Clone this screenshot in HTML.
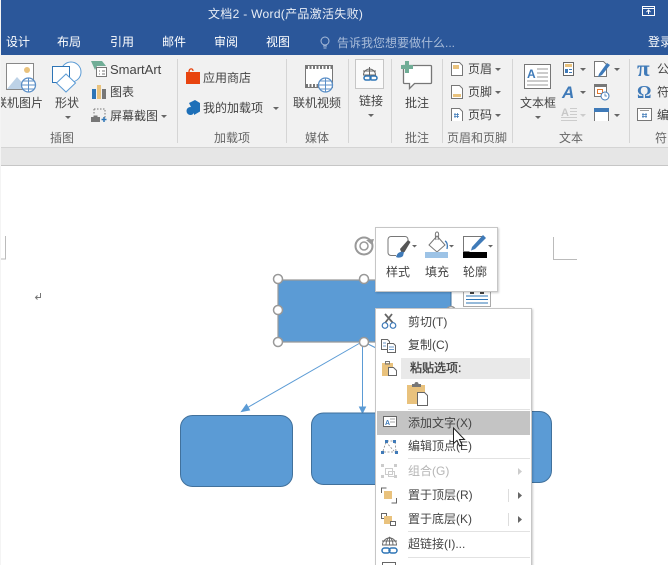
<!DOCTYPE html>
<html><head><meta charset="utf-8">
<style>
html,body{margin:0;padding:0;width:668px;height:565px;overflow:hidden}
body{font-family:"Liberation Sans","Noto Sans CJK SC",sans-serif;background:#fff}
#r{position:absolute;left:0;top:0;width:668px;height:565px;overflow:hidden;background:#fff}
.t{position:absolute;white-space:nowrap;font-size:12px;line-height:16px;color:#444}
.w{color:#fff}
.c{transform:translateX(-50%)}
.g{color:#666}
.m{color:#444;font-size:12px}
svg{position:absolute;left:0;top:0}
.a{position:absolute;width:0;height:0;border-left:3px solid transparent;border-right:3px solid transparent;border-top:3px solid #666}
.s{position:absolute;width:1px;top:59px;height:84px;background:#d5d5d5}
</style></head><body><div id="r">
<div style="position:absolute;left:0;top:0;width:668px;height:55px;background:#2b579a"></div>
<div style="position:absolute;left:0;top:55px;width:668px;height:92px;background:#f1f1f1"></div>
<div style="position:absolute;left:0;top:147px;width:668px;height:19px;background:#e6e6e6;border-top:1px solid #d4d4d4;border-bottom:1px solid #c6c6c6;box-sizing:border-box"></div>

<div class="t w" style="left:208px;top:6px;letter-spacing:.3px;color:#e8edf5">文档2 - Word(产品激活失败)</div>
<div class="t w" style="left:6px;top:34px">设计</div>
<div class="t w" style="left:57px;top:34px">布局</div>
<div class="t w" style="left:110px;top:34px">引用</div>
<div class="t w" style="left:162px;top:34px">邮件</div>
<div class="t w" style="left:214px;top:34px">审阅</div>
<div class="t w" style="left:266px;top:34px">视图</div>
<div class="t" style="left:337px;top:35px;color:#a9bcd9">告诉我您想要做什么...</div>
<div class="t w" style="left:648px;top:34px">登录</div>

<div class="s" style="left:177px"></div><div class="s" style="left:286px"></div><div class="s" style="left:348px"></div><div class="s" style="left:391px"></div><div class="s" style="left:442px"></div><div class="s" style="left:512px"></div><div class="s" style="left:629px"></div>

<div class="t c" style="left:19px;top:95px">联机图片</div>
<div class="t c" style="left:67px;top:95px">形状</div>
<div class="t" style="left:110px;top:62px;font-size:13px">SmartArt</div>
<div class="t" style="left:110px;top:84px">图表</div>
<div class="t" style="left:110px;top:108px">屏幕截图</div>
<div class="t g c" style="left:62px;top:130px">插图</div>
<div class="t" style="left:203px;top:70px">应用商店</div>
<div class="t" style="left:203px;top:100px">我的加载项</div>
<div class="t g c" style="left:232px;top:130px">加载项</div>
<div class="t c" style="left:317px;top:95px">联机视频</div>
<div class="t g c" style="left:317px;top:130px">媒体</div>
<div class="t c" style="left:371px;top:93px">链接</div>
<div class="t c" style="left:417px;top:95px">批注</div>
<div class="t g c" style="left:417px;top:130px">批注</div>
<div class="t" style="left:468px;top:61px">页眉</div>
<div class="t" style="left:468px;top:84px">页脚</div>
<div class="t" style="left:468px;top:107px">页码</div>
<div class="t g c" style="left:477px;top:130px">页眉和页脚</div>
<div class="t c" style="left:538px;top:95px">文本框</div>
<div class="t g c" style="left:571px;top:130px">文本</div>
<div class="t" style="left:657px;top:61px">公</div>
<div class="t" style="left:657px;top:84px">符</div>
<div class="t" style="left:657px;top:107px">编</div>
<div class="t g" style="left:655px;top:130px">符</div>

<div class="a" style="left:65px;top:116px"></div><div class="a" style="left:161px;top:115px"></div><div class="a" style="left:273px;top:107px"></div><div class="a" style="left:368px;top:114px"></div><div class="a" style="left:495px;top:68px"></div><div class="a" style="left:495px;top:91px"></div><div class="a" style="left:495px;top:114px"></div><div class="a" style="left:535px;top:116px"></div><div class="a" style="left:580px;top:68px"></div><div class="a" style="left:580px;top:91px"></div><div class="a" style="left:580px;top:114px;border-top-color:#ccc"></div><div class="a" style="left:614px;top:68px"></div><div class="a" style="left:614px;top:114px"></div>

<svg width="668" height="565" viewBox="0 0 668 565" fill="none">
<!-- restore -->
<path d="M642.500 6.500h12v9h-12z" stroke="#fff"/><path d="M642 8.500h13" stroke="#fff"/><path d="M648.500 14V10M646.500 12l2-2 2 2" stroke="#fff"/>
<!-- bulb -->
<circle cx="325" cy="41" r="4" stroke="#a9bcd9"/><path d="M323 46h4M323.500 48h3" stroke="#a9bcd9"/>
<!-- picture icon -->
<path d="M6.500 63.500h27v26h-27z" fill="#fff" stroke="#888"/><circle cx="27" cy="70" r="3" fill="#e9c27d"/><path d="M7 89l10-12 11 12z" fill="#bdd2e7"/><circle cx="28.500" cy="85" r="7" fill="#fff" stroke="#5b8fc7" stroke-width="1.300"/><path d="M21.500 85h14M28.500 78v14M23 81h11M23 89h11" stroke="#5b8fc7"/>
<!-- shapes -->
<circle cx="71" cy="72" r="10" fill="#fff" stroke="#5b9bd5"/><path d="M52.500 66.500h17v16h-17z" fill="#fff" stroke="#2e75b6"/><path d="M66 74l9.500 9-9.500 9-9.500-9z" fill="#fff" stroke="#5b9bd5"/>
<!-- smartart -->
<path d="M91 61h11l4 5h-9l-2 4z" fill="#70ad96"/><path d="M96.500 67.500h10v9h-10z" fill="#fff" stroke="#777"/><path d="M99 71h1M102 71h3M99 74h1M102 74h3" stroke="#777"/>
<!-- chart -->
<path d="M92 89h4v10h-4z" fill="#2e75b6"/><path d="M97 85h4v14h-4z" fill="#e9c27d"/><path d="M102 89h4v10h-4z" fill="#777"/>
<!-- screenshot -->
<path d="M94 109h11v9" stroke="#777" stroke-dasharray="1.500 1.500"/><path d="M94 109v5" stroke="#777" stroke-dasharray="1.500 1.500"/><path d="M91 117h9v5h-9z" fill="#777"/><path d="M93.500 116.500h4" stroke="#777" stroke-width="2"/><path d="M104 117v5M101.500 119.500h5" stroke="#2e75b6" stroke-width="1.500"/>
<!-- store -->
<path d="M186 72h14v12h-14z" fill="#e8440f"/><path d="M189 72c0-4 4-4 4-1" stroke="#e8440f" stroke-width="1.300"/>
<!-- addins -->
<path d="M194 101l6 3.500v7l-6 3.500v-14z" fill="#1d6fb8"/><path d="M189 103l6-3 5 3v6h-8z" fill="#1d6fb8"/><circle cx="190.500" cy="111" r="4" fill="#1d6fb8"/>
<!-- video -->
<path d="M305.500 65.500h27v22h-27z" fill="#fff" stroke="#777"/><path d="M306 67.500h26M306 85.500h26" stroke="#777" stroke-width="3" stroke-dasharray="2 1.500"/><circle cx="325.500" cy="85" r="7" fill="#fff" stroke="#5b8fc7" stroke-width="1.300"/><path d="M318.500 85h14M325.500 78v14M320 81h11M320 89h11" stroke="#5b8fc7"/>
<!-- link -->
<path d="M355.500 59.500h28v29h-28z" fill="#fafafa" stroke="#c6c6c6"/><path d="M363.500 75a6 6 0 0 1 12 0zM363 71h13M369.500 67v8" stroke="#666"/><rect x="364" y="76" width="7" height="4" rx="2" stroke="#2e75b6" stroke-width="1.500"/><rect x="370" y="76" width="7" height="4" rx="2" stroke="#2e75b6" stroke-width="1.500"/>
<!-- comment -->
<path d="M403.500 65.500h27a1 1 0 0 1 1 1v16a1 1 0 0 1-1 1h-16l-5 5v-5h-5a1 1 0 0 1-1-1v-17z" fill="#fff" stroke="#777" stroke-width="1.300"/><path d="M405 61h4v4h4v4h-4v4h-4v-4h-4v-4h4z" fill="#70ad96"/>
<!-- header footer -->
<path d="M451.500 62.500h8l3 3v10h-11z" fill="#fff" stroke="#777"/><path d="M453 65h6v4h-6z" fill="#e9c27d"/>
<path d="M451.500 85.500h8l3 3v10h-11z" fill="#fff" stroke="#777"/><path d="M453 94h8v3h-8z" fill="#e9c27d"/>
<path d="M451.500 121v-12.500h8l3 3v9.500" fill="#fff" stroke="#777"/><path d="M455 113v5M457.500 113v5M454 114.500h5M454 116.500h5" stroke="#3f7ab8" stroke-width=".8"/>
<!-- textbox -->
<path d="M524.500 64.500h26v24h-26z" fill="#fff" stroke="#777"/><text x="527" y="78" font-family="Liberation Sans" font-size="12" font-weight="bold" fill="#3f7ab8">A</text><path d="M537 69h11M537 73h11M537 77h11M527 81h21M527 85h21" stroke="#999"/>
<path d="M563.500 62.500h10v13h-10z" fill="#fff" stroke="#666"/><path d="M565 64h7v3h-7z" fill="#e9c27d"/><path d="M565 69h3v4h-3z" fill="#3f7ab8"/><path d="M569 69.500h3M569 72.500h3" stroke="#3f7ab8"/>
<text x="562" y="98" font-family="Liberation Sans" font-size="17" font-weight="bold" font-style="italic" fill="#3f7ab8">A</text>
<text x="561" y="116" font-family="Liberation Sans" font-size="11" font-weight="bold" fill="#c8c8c8">A</text><path d="M570 108.500h7M570 111.500h7M570 114.500h7M561 117.500h16M561 120.500h16" stroke="#ccc"/>
<path d="M594.500 61.500h9l3 3v12h-12z" fill="#fff" stroke="#777"/><path d="M599 74l8-11 3 2-8 10-4 2z" fill="#3f7ab8"/>
<path d="M594.500 85.500h12v11h-12z" fill="#fff" stroke="#777"/><path d="M594 84h13v3h-13z" fill="#777"/><path d="M597.500 89.500h5v4h-5z" stroke="#e2772e"/><circle cx="605" cy="96" r="4" fill="#fff" stroke="#3f7ab8"/><path d="M605 93.500V96h2" stroke="#3f7ab8" stroke-width=".8"/>
<path d="M594.500 112h14v9h-14z" fill="#fff"/><path d="M594 108h15v4h-15z" fill="#3f7ab8"/><path d="M594.500 121v-9M608.500 121v-9" stroke="#777"/>
<!-- symbols -->
<text x="637" y="76" font-family="Liberation Serif" font-size="23" font-weight="bold" fill="#3f7ab8">π</text>
<text x="637" y="98" font-family="Liberation Serif" font-size="18" font-weight="bold" fill="#3f7ab8">Ω</text>
<path d="M637.500 108.500h14v12h-14z" fill="#fff" stroke="#777"/><path d="M640 110.500h9" stroke="#999"/><path d="M643 113v5M646 113v5M642 114.500h5M642 116.500h5" stroke="#3f7ab8" stroke-width=".8"/>

<!-- page marks -->
<path d="M5.500 236v23H1" stroke="#bbb"/>
<path d="M553.500 237v22.500H577" stroke="#bbb"/>
<path d="M40.500 293v4.500h-5" stroke="#777"/><path d="M37.500 295.500l-2 2 2 2" stroke="#777"/>

<!-- connectors -->
<path d="M360 343L245 409" stroke="#5b9bd5"/><path d="M241.500 411.500l5-7 3 5.500z" fill="#5b9bd5" stroke="#5b9bd5"/>
<path d="M362.500 343v67" stroke="#5b9bd5"/><path d="M359.500 407h6l-3 6z" fill="#5b9bd5" stroke="#5b9bd5"/>
<path d="M368 344l10 5" stroke="#5b9bd5"/>

<!-- shapes -->
<rect x="180.500" y="415.500" width="112" height="71" rx="12" fill="#5b9bd5" stroke="#41719c"/>
<rect x="311.500" y="413" width="100" height="71.500" rx="12" fill="#5b9bd5" stroke="#41719c"/>
<rect x="480.500" y="411.500" width="71" height="71" rx="12" fill="#5b9bd5" stroke="#41719c"/>
<rect x="278" y="280" width="173" height="62" fill="#5b9bd5" stroke="#41719c"/>
<path d="M278 280h173M278 280v62h173" stroke="#999" stroke-width="1.200"/>
<circle cx="278" cy="279" r="4.500" fill="#fff" stroke="#999" stroke-width="1.500"/>
<circle cx="364" cy="279" r="4.500" fill="#fff" stroke="#999" stroke-width="1.500"/>
<circle cx="278" cy="310" r="4.500" fill="#fff" stroke="#999" stroke-width="1.500"/>
<circle cx="278" cy="342" r="4.500" fill="#fff" stroke="#999" stroke-width="1.500"/>
<circle cx="364" cy="342" r="4.500" fill="#fff" stroke="#999" stroke-width="1.500"/>
<circle cx="451" cy="311" r="4.500" fill="#fff" stroke="#999" stroke-width="1.500"/>
<!-- rotate -->
<circle cx="364" cy="246" r="8.500" stroke="#999" stroke-width="2"/><circle cx="364" cy="246" r="4" stroke="#999" stroke-width="1.500"/><path d="M366 240l6 5 2-6z" fill="#999"/>
<!-- layout options -->
<path d="M463.500 285.500h27v21h-27z" fill="#fff" stroke="#aaa"/><path d="M466 296h22M466 299.500h22M466 303h22" stroke="#2e75b6"/><path d="M470 291h4v3h-4zM480 291h4v3h-4z" fill="#444"/>
</svg>

<!-- mini toolbar -->
<div style="position:absolute;left:375px;top:227px;width:121px;height:63px;background:#fff;border:1px solid #c6c6c6;box-shadow:1px 1px 2px rgba(0,0,0,.2)"></div>
<!-- context menu -->
<div style="position:absolute;left:375px;top:308px;width:155px;height:270px;background:#fff;border:1px solid #c6c6c6;box-shadow:1px 1px 2px rgba(0,0,0,.2)"></div>
<div style="position:absolute;left:401px;top:358px;width:129px;height:21px;background:#e9e9e9"></div>
<div style="position:absolute;left:377px;top:411px;width:153px;height:24px;background:#c4c4c4"></div>
<div style="position:absolute;left:408px;top:409px;width:122px;height:1px;background:#e2e2e2"></div>
<div style="position:absolute;left:408px;top:458px;width:122px;height:1px;background:#e2e2e2"></div>
<div style="position:absolute;left:408px;top:531px;width:122px;height:1px;background:#e2e2e2"></div>
<div style="position:absolute;left:408px;top:557px;width:122px;height:1px;background:#e2e2e2"></div>
<div style="position:absolute;left:508px;top:489px;width:1px;height:13px;background:#ddd"></div>
<div style="position:absolute;left:508px;top:513px;width:1px;height:13px;background:#ddd"></div>

<div class="t c" style="left:398px;top:264px">样式</div>
<div class="t c" style="left:437px;top:264px">填充</div>
<div class="t c" style="left:475px;top:264px">轮廓</div>

<div class="t m" style="left:408px;top:314px">剪切(T)</div>
<div class="t m" style="left:408px;top:337px">复制(C)</div>
<div class="t m" style="left:410px;top:360px;-webkit-text-stroke:.35px #444">粘贴选项:</div>
<div class="t m" style="left:408px;top:415px">添加文字(X)</div>
<div class="t m" style="left:408px;top:438px">编辑顶点(E)</div>
<div class="t m" style="left:408px;top:463px;color:#b5b5b5">组合(G)</div>
<div class="t m" style="left:408px;top:487px">置于顶层(R)</div>
<div class="t m" style="left:408px;top:511px">置于底层(K)</div>
<div class="t m" style="left:408px;top:536px">超链接(I)...</div>

<svg width="668" height="565" viewBox="0 0 668 565" fill="none">
<!-- mini toolbar icons -->
<path d="M396 255.500h-5a3 3 0 0 1-3-3v-13a3 3 0 0 1 3-3h14a3 3 0 0 1 3 3v5" stroke="#777"/><path d="M400 249l8-9 2.500 2-6 10-3 1z" fill="#555"/><path d="M396 257c1-4 4-6 8-5l-1 4c-2 2-5 2-7 1z" fill="#3f7ab8"/><path d="M412 245h5l-2.500 2.500z" fill="#666"/>
<path d="M437 236l8 9-8 7-8-7z" fill="#fff" stroke="#777"/><path d="M437 232c-2 0-2 3-1 8M437 232c2 0 2 3 1 8" stroke="#777"/><path d="M445 241c2 1 3 4 2 8" stroke="#3f7ab8" stroke-width="1.300"/><path d="M425 252h23v6h-23z" fill="#9dc3e6"/><path d="M449 245h5l-2.500 2.500z" fill="#666"/>
<path d="M484 236.500h-20.500v15h6" stroke="#777"/><path d="M463 252h24v6h-24z" fill="#000"/><path d="M472 247l11-12 3 3-11 11-4 1.500z" fill="#3f7ab8"/><path d="M488 245h5l-2.500 2.500z" fill="#666"/>

<!-- menu icons -->
<path d="M385 314l8 9M392 314l-7 9" stroke="#666" stroke-width="1.800"/><circle cx="385" cy="325.500" r="2.800" fill="#fff" stroke="#3f7ab8" stroke-width="1.200"/><circle cx="393" cy="325.500" r="2.800" fill="#fff" stroke="#3f7ab8" stroke-width="1.200"/>
<path d="M381.500 339.500h6l2 2v8h-8z" fill="#fff" stroke="#666"/><path d="M387.500 343.500h6l2 2v7h-8z" fill="#fff" stroke="#666"/><path d="M383 343h3M383 346h3M389 347h5M389 349.500h5" stroke="#3f7ab8" stroke-width=".8"/>
<path d="M382 363h11v13h-11z" fill="#e9c27d"/><path d="M385.500 361.500h4v2.500h-4z" stroke="#777"/><path d="M388.500 367.500h5l3 3v5h-8z" fill="#fff" stroke="#666"/>
<path d="M407 385h18v19h-18z" fill="#e9c27d"/><path d="M412 384h9v3h-9z" fill="#777"/><circle cx="416.500" cy="384" r="2" fill="#777"/><path d="M417.500 392.500h7l3 3v10h-10z" fill="#fff" stroke="#666"/>
<path d="M383.500 416.500h13v10h-13z" fill="#fff" stroke="#666"/><text x="385" y="425" font-family="Liberation Sans" font-size="7" font-weight="bold" fill="#3f7ab8">A</text><path d="M390 419h5M390 422h5" stroke="#888" stroke-width=".8"/>
<path d="M387 441h8M383 451l3-9M396 451l-1-9M384 452h11M386 442l8 9" stroke="#888" stroke-width=".8" stroke-dasharray="2 1.500"/><path d="M385 440h3v3h-3zM393 440h3v3h-3zM381 451h3v3h-3zM395 451h3v3h-3z" fill="#3f7ab8"/>
<path d="M385.500 468.500h7v6h-7zM388.500 471.500h6v5h-6z" stroke="#ccc"/><path d="M381 464h3v3h-3zM394 464h3v3h-3zM381 475h3v3h-3zM394 475h3v3h-3z" fill="#ccc"/>
<path d="M381.500 493v-5h5" stroke="#666"/><path d="M396.500 498v5h-5" stroke="#666"/><path d="M384 491h8v8h-8z" fill="#e9c27d"/>
<path d="M381.500 513.500h5v5h-5z" fill="#fff" stroke="#666"/><path d="M384 516h8v8h-8z" fill="#e9c27d"/><path d="M390.500 521.500h5v4h-5z" fill="#fff" stroke="#666"/>
<path d="M382.500 545a7 7 0 0 1 14 0zM382 541h15M389.500 537v8M386 545c0-4 1-6 3.500-8M393 545c0-4-1-6-3.500-8" stroke="#666" stroke-width=".9"/><rect x="382" y="548" width="8" height="5" rx="2.500" stroke="#2e75b6" stroke-width="1.500"/><rect x="389" y="548" width="8" height="5" rx="2.500" stroke="#2e75b6" stroke-width="1.500"/>
<path d="M382.500 566v-3.500h13V566" stroke="#666"/>
<path d="M518 468l4 3.500-4 3.500z" fill="#ccc"/><path d="M518 492l4 3.500-4 3.500z" fill="#666"/><path d="M518 516l4 3.500-4 3.500z" fill="#666"/>
<!-- cursor -->
<path d="M453.500 428v15.500l3.500-3 2.500 5.500 2.500-1-2.500-5.500h5z" fill="#fff" stroke="#222"/>
<path d="M0.500 0v565" stroke="#f4f4f4"/>
</svg>
</div></body></html>
